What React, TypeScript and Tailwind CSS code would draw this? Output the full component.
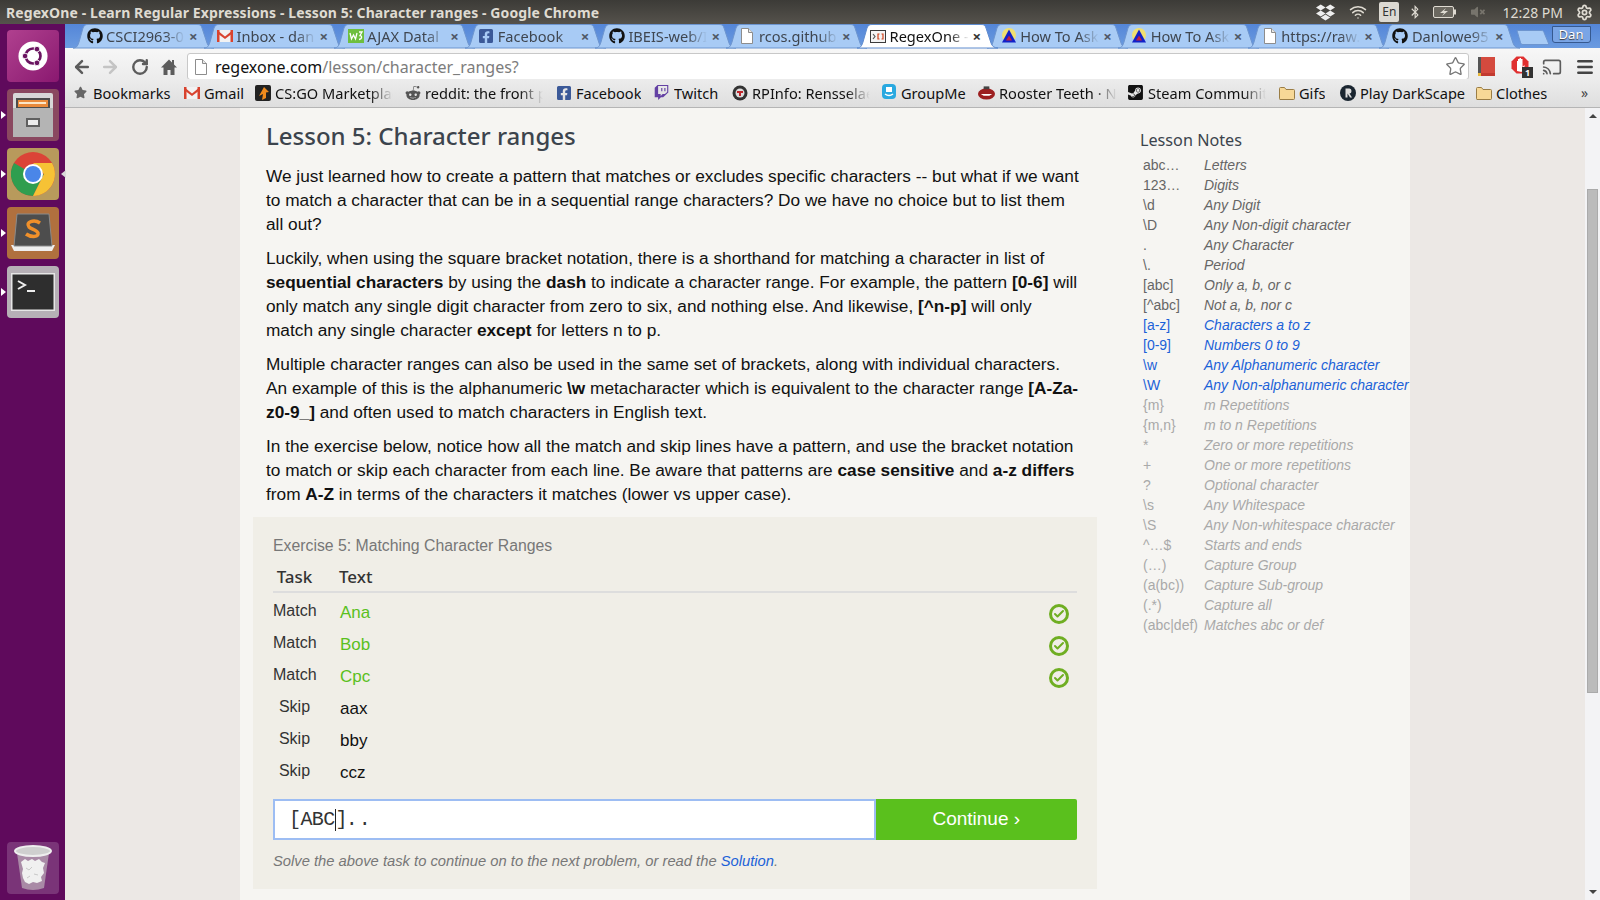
import React from "react";
import { FaGithub, FaFacebookSquare, FaTwitch, FaSteamSquare, FaRedditAlien, FaDropbox, FaBluetoothB, FaVolumeMute, FaStar } from "react-icons/fa";
import { ArrowLeft, ArrowRight, RotateCw, Cast, Menu, Wifi, Check, Settings, Star } from "lucide-react";

const ui = "font-['Noto_Sans',sans-serif]";

function GmailIcon() {
  return (
    <svg width="16" height="14" viewBox="0 0 16 14">
      <rect x="0.5" y="1" width="15" height="12" fill="#f2f2f2" />
      <path d="M0 1h2.5v12H0zM13.5 1H16v12h-2.5z" fill="#d8432f" />
      <path d="M0 1l8 6.5L16 1v3L8 10 0 4z" fill="#d8432f" />
    </svg>
  );
}
function PageIcon() {
  return (
    <svg width="14" height="16" viewBox="0 0 14 16">
      <path d="M1.5 0.5h7l4 4v11h-11z" fill="#fff" stroke="#8d8d8d" />
      <path d="M8.5 0.5v4h4" fill="#e8e8e8" stroke="#8d8d8d" />
    </svg>
  );
}
function W3Icon() {
  return (
    <svg width="16" height="14" viewBox="0 0 16 14">
      <rect width="16" height="14" fill="#6ebf3f" />
      <path d="M2 4l1.5 6 2-4 2 4L9 4M11 3h3l-2 3.5c2 0 2.5 3.5-1 4" fill="none" stroke="#fff" strokeWidth="1.3" />
    </svg>
  );
}
function RegexIcon() {
  return (
    <svg width="16" height="13" viewBox="0 0 16 13">
      <rect x="0.5" y="0.5" width="15" height="12" fill="#f4f4f4" stroke="#3b3b3b" />
      <path d="M3 4l2 2.500-2 2.500" fill="none" stroke="#555" strokeWidth="1.2" />
      <path d="M9.500 4H8v5h1.500M11.500 4H13v5h-1.500" fill="none" stroke="#d0421b" strokeWidth="1.2" />
    </svg>
  );
}
function AskIcon() {
  return (
    <svg width="16" height="16" viewBox="0 0 16 16">
      <circle cx="8" cy="7" r="7" fill="#f0e070" />
      <path d="M8 1.500L15 14.500H1z" fill="#1220c8" />
      <path d="M8 7.500l3 5H5z" fill="#c02040" />
    </svg>
  );
}
function FolderIcon() {
  return (
    <svg width="16" height="14" viewBox="0 0 16 14">
      <path d="M0.500 12.500V2.500q0-1 1-1h4l1.500 2h7.500q1 0 1 1v8q0 1-1 1h-13.500q-0.500 0-0.500-1z" fill="#f7d896" stroke="#9a7d45" />
    </svg>
  );
}

const tabs = [
  { t: "CSCI2963-01", i: <FaGithub size={16} color="#111" /> },
  { t: "Inbox - dan", i: <GmailIcon /> },
  { t: "AJAX Datal", i: <W3Icon /> },
  { t: "Facebook", i: <FaFacebookSquare size={16} color="#3b5998" /> },
  { t: "IBEIS-web/IBEIS", i: <FaGithub size={16} color="#111" /> },
  { t: "rcos.github.io", i: <PageIcon /> },
  { t: "RegexOne - Learn", i: <RegexIcon />, active: true },
  { t: "How To Ask Questions", i: <AskIcon /> },
  { t: "How To Ask Questions", i: <AskIcon /> },
  { t: "https://raw.github", i: <PageIcon /> },
  { t: "Danlowe95 (Dan)", i: <FaGithub size={16} color="#111" /> },
];

function Tab({ t, i, active }: { t: string; i: React.ReactNode; active?: boolean }) {
  return (
    <div className={`relative w-[130.6px] h-[24px] shrink-0 flex items-center pl-[13px] ${active ? "z-10" : ""}`}>
      <svg className="absolute left-0 top-0 overflow-visible" width="141" height="24" viewBox="0 0 141 24">
        <path
          d="M0 24C4 24 5 21 6 18L10 4C11 1 13 0.500 15 0.500H124C127 0.500 128 1 129 4L134 19C135 22 137 24 141 24Z"
          fill={active ? "#ffffff" : "#a8cbf5"}
          stroke={active ? "#5f8ccf" : "#6d95cf"}
        />
      </svg>
      <div className="relative flex items-center w-[99px] gap-[3px]">
        <span className="w-[17px] shrink-0 flex justify-center">{i}</span>
        <span className={`overflow-hidden whitespace-nowrap flex-1 text-[14.6px] leading-[20px] [mask-image:linear-gradient(to_right,#000_75%,transparent)] ${active ? "text-[#111]" : "text-[#3f4650]"}`}>{t}</span>
      </div>
      <span className={`relative ml-[4px] text-[15px] font-bold leading-none ${active ? "text-[#333]" : "text-[#4f5865]"}`}>×</span>
    </div>
  );
}

function BM({ w, i, t, fade }: { w: string; i: React.ReactNode; t: string; fade?: boolean }) {
  return (
    <div className={`${w} shrink-0 flex items-center gap-[4px]`}>
      <span className="w-[17px] shrink-0 flex justify-center">{i}</span>
      <span className={`overflow-hidden whitespace-nowrap text-[14.6px] leading-[20px] text-[#111] ${fade ? "w-[118px] [mask-image:linear-gradient(to_right,#000_80%,transparent)]" : ""}`}>{t}</span>
    </div>
  );
}

const notes: [string, string, string][] = [
  ["abc…", "Letters", "n"], ["123…", "Digits", "n"], ["\\d", "Any Digit", "n"], ["\\D", "Any Non-digit character", "n"],
  [".", "Any Character", "n"], ["\\.", "Period", "n"], ["[abc]", "Only a, b, or c", "n"], ["[^abc]", "Not a, b, nor c", "n"],
  ["[a-z]", "Characters a to z", "b"], ["[0-9]", "Numbers 0 to 9", "b"], ["\\w", "Any Alphanumeric character", "b"], ["\\W", "Any Non-alphanumeric character", "b"],
  ["{m}", "m Repetitions", "f"], ["{m,n}", "m to n Repetitions", "f"], ["*", "Zero or more repetitions", "f"], ["+", "One or more repetitions", "f"],
  ["?", "Optional character", "f"], ["\\s", "Any Whitespace", "f"], ["\\S", "Any Non-whitespace character", "f"], ["^…$", "Starts and ends", "f"],
  ["(…)", "Capture Group", "f"], ["(a(bc))", "Capture Sub-group", "f"], ["(.*)", "Capture all", "f"], ["(abc|def)", "Matches abc or def", "f"],
];

function Tile({ className, children }: { className: string; children: React.ReactNode }) {
  return <div className={`w-[52px] h-[52px] rounded-[4px] flex items-center justify-center ${className}`}>{children}</div>;
}
function Pip({ className }: { className: string }) {
  return <span className={`absolute w-0 h-0 border-y-[4px] border-y-transparent ${className}`} />;
}

function Launcher() {
  return (
    <div className="w-[65px] shrink-0 bg-[#5f0a5c] flex flex-col items-center pt-[6px] pb-[6px] gap-[7px] h-full">
      <Tile className="bg-gradient-to-br from-[#b0408f] to-[#8a1770]">
        <svg width="30" height="30" viewBox="0 0 34 34">
          <circle cx="17" cy="17" r="16.500" fill="#fff" />
          <circle cx="17" cy="17" r="8.500" fill="none" stroke="#6a1460" strokeWidth="3" />
          <circle cx="8" cy="17" r="3.200" fill="#6a1460" stroke="#fff" />
          <circle cx="21.500" cy="9.200" r="3.200" fill="#6a1460" stroke="#fff" />
          <circle cx="21.500" cy="24.800" r="3.200" fill="#6a1460" stroke="#fff" />
        </svg>
      </Tile>
      <div className="relative">
        <Pip className="-left-[6px] top-[22px] border-l-[5px] border-l-white" />
        <Tile className="bg-[#8a4860]">
          <svg width="42" height="46" viewBox="0 0 42 46">
            <rect x="1" y="1" width="40" height="44" rx="2" fill="#d8d8d8" />
            <rect x="4" y="6" width="34" height="12" fill="#4c4c4c" />
            <rect x="6" y="8" width="30" height="7" fill="#e88a3c" />
            <rect x="7" y="10" width="27" height="2" fill="#fbe6c8" />
            <rect x="1" y="16" width="40" height="29" fill="#b4b4b4" />
            <rect x="14" y="26" width="14" height="9" fill="#5f5f5f" />
            <rect x="16" y="28" width="10" height="5" fill="#ececec" />
          </svg>
        </Tile>
      </div>
      <div className="relative">
        <Pip className="-left-[6px] top-[22px] border-l-[5px] border-l-white" />
        <Pip className="-right-[7px] top-[22px] border-r-[5px] border-r-[#d8d8d8]" />
        <Tile className="bg-[#b89a5c]">
          <svg width="44" height="44" viewBox="0 0 44 44">
            <circle cx="22" cy="22" r="22" fill="#db4437" />
            <path d="M22 22L3 33A22 22 0 0 1 3 11Z M3 33A22 22 0 0 0 22 44L33 22H22Z" fill="#2f9e4f" />
            <path d="M22 11H41A22 22 0 0 1 22 44L33 22Z" fill="#f6c235" />
            <circle cx="22" cy="22" r="10" fill="#fff" />
            <circle cx="22" cy="22" r="8" fill="#4a86e8" />
          </svg>
        </Tile>
      </div>
      <div className="relative">
        <Pip className="-left-[6px] top-[22px] border-l-[5px] border-l-white" />
        <Tile className="bg-[#b0703e]">
          <svg width="46" height="44" viewBox="0 0 46 44">
            <path d="M1 34L4 40H42L45 34Z" fill="#eee" />
            <path d="M7 3H39L42 35H4Z" fill="#4d4d4d" stroke="#8a8a8a" />
            <path d="M30 12C24 8 15 11 19 16C21 18 27 19 28 22C29 27 20 26 16 23" fill="none" stroke="#f0902a" strokeWidth="3.500" />
          </svg>
        </Tile>
      </div>
      <div className="relative">
        <Pip className="-left-[6px] top-[22px] border-l-[5px] border-l-white" />
        <Tile className="bg-[#b6b0b6]">
          <svg width="44" height="38" viewBox="0 0 44 38">
            <rect x="0.500" y="0.500" width="43" height="37" fill="#2e2e2e" stroke="#e6e6e6" strokeWidth="2" />
            <path d="M7 8l7 4-7 4" fill="none" stroke="#eee" strokeWidth="2" />
            <rect x="16" y="17" width="8" height="2" fill="#eee" />
          </svg>
        </Tile>
      </div>
      <div className="flex-1" />
      <Tile className="bg-[#7a3478]">
        <svg width="38" height="48" viewBox="0 0 38 48">
          <path d="M3 9L8 44Q19 48 30 44L35 9Z" fill="#a98aa6" />
          <ellipse cx="19" cy="7" rx="18" ry="5" fill="#cfcfcf" stroke="#eee" strokeWidth="2" />
          <path d="M7 18l4-3 3 2 4-2 3 2 4-2 3 3 3 1-2 5 1 5-3 4 1 4-5 2-4-1-4 2-4-2-2-4-1-5 1-4z" fill="#f0f0f0" />
          <path d="M12 24l3 2 3-3M20 30l4 1M13 34l3-2" fill="none" stroke="#c8c8c8" />
        </svg>
      </Tile>
    </div>
  );
}

function TitleBar() {
  return (
    <div className={`h-[24px] shrink-0 bg-gradient-to-b from-[#3c3b37] to-[#55524c] flex items-center ${ui}`}>
      <span className="pl-[6px] text-[14px] font-bold text-[#dfdbd2] tracking-[0.1px] whitespace-nowrap">RegexOne - Learn Regular Expressions - Lesson 5: Character ranges - Google Chrome</span>
      <div className="flex-1" />
      <div className="flex items-center text-[#dfdbd2]">
        <FaDropbox size={19} color="#eeeeee" />
        <Wifi size={18} className="ml-[14px]" />
        <span className="ml-[12px] w-[20px] h-[20px] bg-[#dcd9d2] text-[#333] rounded-[2px] flex items-center justify-center text-[12px]">En</span>
        <FaBluetoothB size={14} className="ml-[9px]" />
        <svg className="ml-[11px]" width="24" height="14" viewBox="0 0 24 14">
          <rect x="0.500" y="1.500" width="20" height="11" rx="1.500" fill="#6b6860" stroke="#dfdbd2" />
          <rect x="21" y="4.500" width="2" height="5" fill="#dfdbd2" />
          <path d="M13 3L7 8h4l-2 3 6-5h-4z" fill="#dfdbd2" />
        </svg>
        <FaVolumeMute size={14} color="#77746c" className="ml-[14px]" />
        <span className="ml-[17px] text-[14px] whitespace-nowrap">12:28 PM</span>
        <Settings size={17} strokeWidth={2.5} className="ml-[13px] mr-[7px]" />
      </div>
    </div>
  );
}

function TabStrip() {
  return (
    <div className={`h-[24px] shrink-0 bg-gradient-to-b from-[#5486d8] to-[#6b9be0] flex items-end pl-[8px] ${ui}`}>
      {tabs.map((x, k) => <Tab key={k} t={x.t} i={x.i} active={x.active} />)}
      <svg className="ml-[6px] mb-[3px]" width="34" height="15" viewBox="0 0 34 15">
        <path d="M1 0.500H25C27 0.500 27.500 1 28 2.500L33 14.500H7C5.500 14.500 5 14 4.500 12.500Z" fill="#a8cbf5" stroke="#6d95cf" />
      </svg>
      <div className="ml-[2px] mb-[5px] w-[39px] h-[17px] rounded-b-[3px] border border-[#36598f] bg-[#7aa5e6] text-white [text-shadow:0_1px_1px_#333] text-[13px] leading-[15px] flex items-center justify-center">Dan</div>
    </div>
  );
}

function HomeIcon() {
  return (
    <svg className="ml-[11px]" width="18" height="18" viewBox="0 0 18 18">
      <path d="M9 1.500L1 9.500h2.500V17h4v-5h3v5h4V9.500H17l-3-3V2h-2v2.500z" fill="#5c5c5c" />
    </svg>
  );
}

function Toolbar() {
  return (
    <div className={`h-[31px] shrink-0 bg-gradient-to-b from-[#f7f7f7] to-[#ececec] flex items-start pt-[5px] ${ui}`}>
      <div className="h-[27px] flex items-center">
        <ArrowLeft size={20} strokeWidth={3} color="#5c5c5c" className="ml-[7px]" />
        <ArrowRight size={20} strokeWidth={3} color="#c4c4c4" className="ml-[8px]" />
        <RotateCw size={18} strokeWidth={3.2} color="#5c5c5c" className="ml-[11px]" />
        <HomeIcon />
      </div>
      <div className="ml-[9px] w-[1282px] h-[27px] bg-white border border-[#c8c8c8] rounded-[3px] flex items-center">
        <span className="ml-[6px]"><PageIcon /></span>
        <span className="ml-[7px] text-[16px] leading-[20px] text-[#111] whitespace-nowrap">regexone.com<span className="text-[#7c7c7c]">/lesson/character_ranges?</span></span>
        <div className="flex-1" />
        <Star size={21} strokeWidth={1.5} color="#777" className="mr-[2px]" />
      </div>
      <div className="h-[27px] flex items-center">
        <svg className="ml-[9px]" width="17" height="20" viewBox="0 0 17 20">
          <rect width="17" height="19" fill="#d44a3e" />
          <rect width="3" height="19" fill="#555" />
          <rect y="16" width="17" height="3" fill="#c23a30" />
          <rect y="16" width="3" height="3" fill="#e8b83a" />
        </svg>
        <div className="relative ml-[16px] w-[20px] h-[22px]">
          <svg width="18" height="18" viewBox="0 0 18 18">
            <path d="M5.500 0.500h7l5 5v7l-5 5h-7l-5-5v-7z" fill="#e03030" />
            <path d="M6 15V5h1v4-6h1.500v6-7H10v7-6h1.500v8l2-2v2l-3 5z" fill="#fff" />
          </svg>
          <span className="absolute right-[-2px] bottom-0 w-[11px] h-[11px] bg-[#333] text-white text-[9px] leading-[11px] text-center font-bold">1</span>
        </div>
        <Cast size={20} color="#5c5c5c" strokeWidth={2} className="ml-[11px]" />
        <Menu size={20} color="#444" strokeWidth={3} className="ml-[13px]" />
      </div>
    </div>
  );
}

function Bookmarks() {
  return (
    <div className={`h-[29px] shrink-0 bg-gradient-to-b from-[#ececec] to-[#dedede] border-b border-[#b5b5b5] flex items-center pl-[7px] pb-[1px] ${ui}`}>
      <BM w="w-[111px]" i={<FaStar size={13} color="#666" />} t="Bookmarks" />
      <BM w="w-[71px]" i={<GmailIcon />} t="Gmail" />
      <BM w="w-[150px]" i={<svg width="16" height="16" viewBox="0 0 16 16"><rect width="16" height="16" rx="2" fill="#222" /><path d="M9 2l5 5-3 .5V13l-4 2 1-6-4 2z" fill="#f08a1c" /></svg>} t="CS:GO Marketplace" fade />
      <BM w="w-[151px]" i={<FaRedditAlien size={16} color="#555" />} t="reddit: the front page" fade />
      <BM w="w-[98px]" i={<FaFacebookSquare size={16} color="#3b5998" />} t="Facebook" />
      <BM w="w-[78px]" i={<FaTwitch size={15} color="#6441a4" />} t="Twitch" />
      <BM w="w-[149px]" i={<svg width="16" height="16" viewBox="0 0 16 16"><circle cx="8" cy="8" r="7.500" fill="#333" /><circle cx="8" cy="8" r="4.500" fill="#ddd" /><path d="M5 6h6v2H9v3H7V8H5z" fill="#c0272d" /></svg>} t="RPInfo: Rensselaer" fade />
      <BM w="w-[98px]" i={<svg width="16" height="17" viewBox="0 0 16 17"><rect x="1" width="14" height="15" rx="4" fill="#29a9e0" /><path d="M4 10q4 3 8 0" fill="none" stroke="#fff" strokeWidth="1.500" /><rect x="5" y="3" width="6" height="5" fill="#fff" /></svg>} t="GroupMe" />
      <BM w="w-[149px]" i={<svg width="18" height="16" viewBox="0 0 18 16"><ellipse cx="9" cy="9" rx="9" ry="6" fill="#9c1f20" /><path d="M3 9h12l-3 2H6z" fill="#fff" /><rect x="6" y="1" width="6" height="3" fill="#444" /></svg>} t="Rooster Teeth · News" fade />
      <BM w="w-[151px]" i={<FaSteamSquare size={17} color="#111" />} t="Steam Community" fade />
      <BM w="w-[61px]" i={<FolderIcon />} t="Gifs" />
      <BM w="w-[136px]" i={<svg width="16" height="16" viewBox="0 0 16 16"><circle cx="8" cy="8" r="8" fill="#1a2530" /><path d="M5.500 3.500h4q2 0 2 2.500t-2 2.500l2.500 4h-2L7.500 8.500V12.500h-2z" fill="#ddd" /></svg>} t="Play DarkScape" />
      <BM w="w-[86px]" i={<FolderIcon />} t="Clothes" />
      <span className="ml-[20px] text-[14px] text-[#444] leading-none">»</span>
    </div>
  );
}

function CheckIcon() {
  return (
    <span className="w-[20px] h-[20px] rounded-full border-[3px] border-[#6fae22] flex items-center justify-center">
      <Check size={12} strokeWidth={4} color="#6fae22" />
    </span>
  );
}

function Row({ task, text, done }: { task: string; text: string; done?: boolean }) {
  return (
    <div className="h-[32px] flex items-center">
      <span className="w-[43px] text-center text-[16px] leading-[20px] text-[#333] -translate-y-[2px]">{task}</span>
      <span className={`ml-[24px] text-[17px] leading-[20px] flex-1 ${done ? "text-[#5ac01d]" : "text-[#111]"}`}>{text}</span>
      {done ? <span className="mr-[8px] translate-y-[1px]"><CheckIcon /></span> : null}
    </div>
  );
}

function Exercise() {
  return (
    <div className="mt-[11px] bg-[#f0eee7] px-[20px] pt-[19px] h-[372px]">
      <div className="text-[15.8px] leading-[20px] text-[#777]">Exercise 5: Matching Character Ranges</div>
      <div className={`mt-[10px] h-[27px] border-b-2 border-[#dddddd] flex text-[17px] font-medium text-[#333] leading-[22px] ${ui}`}>
        <span className="w-[43px] text-center">Task</span>
        <span className="ml-[23px]">Text</span>
      </div>
      <div className="pt-[4px]">
        <Row task="Match" text="Ana" done />
        <Row task="Match" text="Bob" done />
        <Row task="Match" text="Cpc" done />
        <Row task="Skip" text="aax" />
        <Row task="Skip" text="bby" />
        <Row task="Skip" text="ccz" />
      </div>
      <div className="mt-[10px] flex h-[41px]">
        <div className="w-[604px] border-2 border-[#9dbdf3] bg-white flex items-center pl-[14px] font-['Liberation_Mono',monospace] text-[20px] text-[#333]">
          <span className="tracking-[-0.6px]">[ABC</span><span className="w-[1px] h-[22px] bg-[#222]" /><span className="tracking-[-2px]">]</span><span className="tracking-[1px]">..</span>
        </div>
        <button className="w-[202px] bg-[#5ac01d] text-white text-[19px] rounded-r-[2px]">Continue ›</button>
      </div>
      <div className="mt-[11px] text-[14.76px] leading-[20px] italic text-[#777]">Solve the above task to continue on to the next problem, or read the <span className="text-[#1c62d8]">Solution</span>.</div>
    </div>
  );
}

function Article() {
  return (
    <div className="w-[844px] shrink-0">
      <div className="px-[13px]">
        <h1 className={`h-[43px] pt-[10px] text-[24px] leading-[36px] font-medium text-[#3c444d] ${ui}`}>Lesson 5: Character ranges</h1>
        <div className="text-[17.26px] leading-[24px] text-[#111] w-[815px] mt-[13px]">
          <p>We just learned how to create a pattern that matches or excludes specific characters -- but what if we want to match a character that can be in a sequential range characters? Do we have no choice but to list them all out?</p>
          <p className="mt-[10px]">Luckily, when using the square bracket notation, there is a shorthand for matching a character in list of <b>sequential characters</b> by using the <b>dash</b> to indicate a character range. For example, the pattern <b>[0-6]</b> will only match any single digit character from zero to six, and nothing else. And likewise, <b>[^n-p]</b> will only match any single character <b>except</b> for letters n to p.</p>
          <p className="mt-[10px]">Multiple character ranges can also be used in the same set of brackets, along with individual characters. An example of this is the alphanumeric <b>\w</b> metacharacter which is equivalent to the character range <b>[A-Za-z0-9_]</b> and often used to match characters in English text.</p>
          <p className="mt-[10px]">In the exercise below, notice how all the match and skip lines have a pattern, and use the bracket notation to match or skip each character from each line. Be aware that patterns are <b>case sensitive</b> and <b>a-z differs</b> from <b>A-Z</b> in terms of the characters it matches (lower vs upper case).</p>
        </div>
      </div>
      <Exercise />
    </div>
  );
}

function Notes() {
  return (
    <div className="ml-[43px] w-[269px] shrink-0 pt-[20px]">
      <div className={`text-[16.2px] leading-[24px] text-[#3c444d] ${ui}`}>Lesson Notes</div>
      <div className="mt-[3px] text-[14px] leading-[20px]">
        {notes.map(([k, d, c], n) => (
          <div key={n} className={`flex whitespace-nowrap ${c === "b" ? "text-[#1c62d8]" : c === "f" ? "text-[#a9a9a9]" : "text-[#666]"}`}>
            <span className="w-[64px] pl-[3px] shrink-0">{k}</span>
            <span className="italic">{d}</span>
          </div>
        ))}
      </div>
    </div>
  );
}

function Scrollbar() {
  return (
    <div className="w-[15px] shrink-0 bg-[#f3f3f5] flex flex-col items-center">
      <span className="mt-[6px] w-0 h-0 border-x-[4px] border-x-transparent border-b-[4px] border-b-[#444]" />
      <div className="mt-[71px] w-[11px] h-[504px] bg-[#bbbbbb] border border-[#aaa]" />
      <div className="flex-1" />
      <span className="mb-[6px] w-0 h-0 border-x-[4px] border-x-transparent border-t-[4px] border-t-[#444]" />
    </div>
  );
}

export default function App() {
  return (
    <div className="w-[1600px] h-[900px] overflow-hidden flex flex-col font-['Liberation_Sans',sans-serif]">
      <TitleBar />
      <div className="flex-1 min-h-0 flex">
        <Launcher />
        <div className="flex-1 min-w-0 flex flex-col">
          <TabStrip />
          <Toolbar />
          <Bookmarks />
          <div className="flex-1 min-h-0 flex bg-[#ece8e5]">
            <div className="w-[175px] shrink-0" />
            <div className="w-[1170px] shrink-0 bg-[#f6f5f2] pl-[13px] flex">
              <Article />
              <Notes />
            </div>
            <div className="flex-1" />
            <Scrollbar />
          </div>
        </div>
      </div>
    </div>
  );
}
